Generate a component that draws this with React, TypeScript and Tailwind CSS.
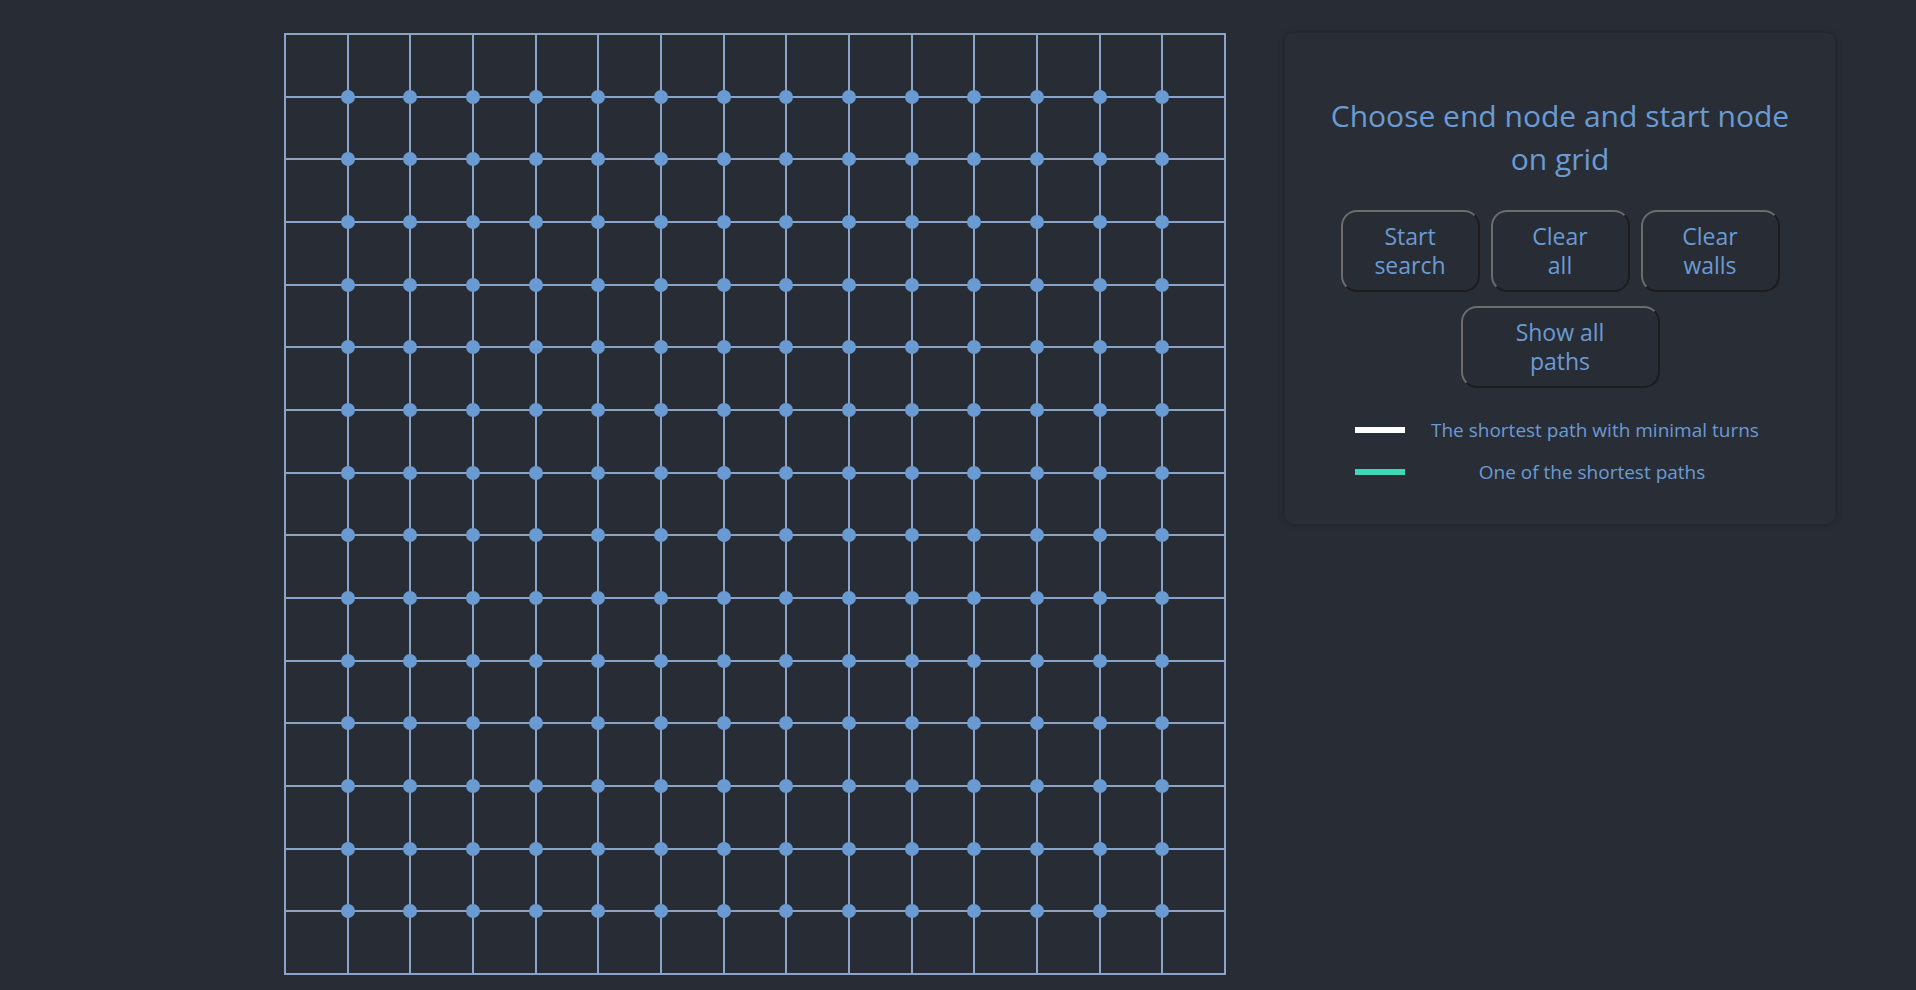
const SIZE = 15;

const lineColor = 'border-[#8ca3c8]';

function GridBoard() {
  const cells = [];
  for (let r = 0; r < SIZE; r++) {
    for (let c = 0; c < SIZE; c++) {
      const hasNode = r < SIZE - 1 && c < SIZE - 1;
      cells.push(
        <div key={`${r}-${c}`} className={`relative border ${lineColor}`}>
          {hasNode && (
            <span className="absolute -right-[8px] -bottom-[8px] z-10 h-[14px] w-[14px] rounded-full bg-[#6a9ad2]" />
          )}
        </div>
      );
    }
  }

  return (
    <div className={`grid h-[942px] w-[942px] shrink-0 grid-cols-15 grid-rows-15 border ${lineColor}`}>
      {cells}
    </div>
  );
}

function ControlButton({ children, wide }: { children: React.ReactNode; wide?: boolean }) {
  return (
    <button
      className={`${wide ? 'w-[199px]' : 'w-[139px]'} rounded-[16px] border-2 border-t-[#6c6c6c] border-l-[#6c6c6c] border-r-[#1d1d1d] border-b-[#1d1d1d] bg-[#282c35] py-[10px] text-[23px] leading-[29px] text-[#6b9bd3]`}
    >
      {children}
    </button>
  );
}

export default function App() {
  return (
    <div
      className="min-h-[990px] w-full bg-[#282c34] pt-[33px] pl-[284px]"
      style={{ fontFamily: '"Open Sans", "Noto Sans", sans-serif' }}
    >
      <div className="flex items-start gap-[59px]">
        <GridBoard />

        <div className="w-[550px] rounded-[8px] bg-[#292d36] px-[40px] pt-[61px] pb-[39px] shadow-[0_0_6px_rgba(0,0,0,0.25)]">
          <h1 className="text-center text-[30px] leading-[43px] font-normal text-[#6b9bd3]">
            Choose end node and start node on grid
          </h1>

          <div className="mt-[30px] flex flex-col items-center gap-[14px]">
            <div className="flex gap-[11px]">
              <ControlButton>
                Start
                <br />
                search
              </ControlButton>
              <ControlButton>
                Clear
                <br />
                all
              </ControlButton>
              <ControlButton>
                Clear
                <br />
                walls
              </ControlButton>
            </div>
            <ControlButton wide>
              Show all
              <br />
              paths
            </ControlButton>
          </div>

          <div className="mt-[29px] flex justify-center pr-[12px]">
            <div className="grid grid-cols-[50px_322px] items-center gap-x-[26px] gap-y-[16px] text-[19px] leading-[26px] text-[#6b9bd3]">
              <span className="h-[6px] w-[50px] bg-white" />
              <span className="whitespace-nowrap text-center">The shortest path with minimal turns</span>
              <span className="h-[6px] w-[50px] bg-[#3fd8b7]" />
              <span className="whitespace-nowrap text-center">One of the shortest paths</span>
            </div>
          </div>
        </div>
      </div>
    </div>
  );
}
